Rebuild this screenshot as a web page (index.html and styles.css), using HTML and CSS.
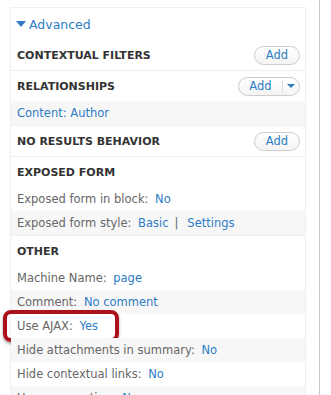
FILE: index.html
```html
<!DOCTYPE html>
<html lang="en">
<head>
    <meta charset="UTF-8">
    <title>Views - Advanced</title>
    <link rel="stylesheet" href="styles.css">
</head>
<body>
<div class="page">
    <div class="panel">
        <div class="advanced">
            <span class="caret"></span>
            <a href="#">Advanced</a>
        </div>

        <div class="section">
            <div class="section-head">
                <h3>Contextual filters</h3>
                <button class="add-button">Add</button>
            </div>
        </div>

        <div class="section">
            <div class="section-head">
                <h3>Relationships</h3>
                <div class="add-split">
                    <span class="add-label">Add</span>
                    <span class="add-caret"></span>
                </div>
            </div>
            <div class="item odd"><a href="#" class="first">Content: Author</a></div>
        </div>

        <div class="section">
            <div class="section-head">
                <h3>No results behavior</h3>
                <button class="add-button">Add</button>
            </div>
        </div>

        <div class="section">
            <div class="section-head">
                <h3>Exposed form</h3>
            </div>
            <div class="item">Exposed form in block: <a href="#">No</a></div>
            <div class="item odd">Exposed form style: <a href="#">Basic</a><span class="pipe">|</span><a href="#">Settings</a></div>
        </div>

        <div class="section last">
            <div class="section-head">
                <h3>Other</h3>
            </div>
            <div class="item">Machine Name: <a href="#">page</a></div>
            <div class="item odd">Comment: <a href="#">No comment</a></div>
            <div class="item">Use AJAX: <a href="#">Yes</a><span class="callout"></span></div>
            <div class="item odd">Hide attachments in summary: <a href="#">No</a></div>
            <div class="item">Hide contextual links: <a href="#">No</a></div>
            <div class="item odd">Use aggregation: <a href="#">No</a></div>
        </div>
    </div>
    <div class="rule"></div>
</div>
</body>
</html>
```

FILE: styles.css
```css
body {
    margin: 0;
    background-color: #fff;
    font-family: "DejaVu Sans", Verdana, sans-serif;
    overflow: hidden;
}

a {
    color: #2d7cc4;
    text-decoration: none;
}

.page {
    display: flex;
    height: 395px;
}

.panel {
    width: 294px;
    margin: 7px 0 0 10px;
    border: 1px solid #efefef;
    border-bottom: none;
}

.rule {
    width: 1px;
    margin-left: 13px;
    background-color: #c8c8c8;
}

.advanced {
    display: flex;
    align-items: center;
    height: 32px;
    padding-left: 5px;
    font-size: 12.5px;
}

.caret {
    width: 0;
    height: 0;
    border-left: 5px solid transparent;
    border-right: 5px solid transparent;
    border-top: 6px solid #2d7cc4;
    margin-right: 3px;
}

.section {
    border-bottom: 1px solid #efefef;
}

.section.last {
    border-bottom: none;
}

.section-head {
    display: flex;
    align-items: center;
    justify-content: space-between;
    height: 30px;
    padding: 0 5px 0 6px;
}

.section-head h3 {
    margin: 0;
    font-size: 11px;
    font-weight: bold;
    color: #333;
    text-transform: uppercase;
}

.add-button {
    width: 46px;
    height: 19px;
    padding: 0;
    border: 1px solid #ccc;
    border-radius: 10px;
    background: linear-gradient(#fff, #f4f4f4);
    color: #2d7cc4;
    font-family: inherit;
    font-size: 11.5px;
}

.add-split {
    display: flex;
    align-items: center;
    width: 60px;
    height: 17px;
    border: 1px solid #ccc;
    border-radius: 10px;
    background: linear-gradient(#fff, #f4f4f4);
}

.add-label {
    width: 43px;
    text-align: center;
    color: #2d7cc4;
    font-size: 11.5px;
    border-right: 1px solid #ddd;
    line-height: 13px;
}

.add-caret {
    width: 0;
    height: 0;
    margin-left: 4px;
    border-left: 4px solid transparent;
    border-right: 4px solid transparent;
    border-top: 4px solid #2d7cc4;
}

.item {
    position: relative;
    display: flex;
    align-items: center;
    height: 24px;
    padding-left: 6px;
    font-size: 11.5px;
    color: #666;
    white-space: pre;
}

.item a {
    margin-left: 3px;
}

.item a.first {
    margin-left: 0;
}

.item.odd {
    background-color: #f7f7f7;
}

.pipe {
    margin: 0 6px 0 6px;
}

.callout {
    position: absolute;
    left: -8px;
    top: -4px;
    width: 108px;
    height: 24px;
    border: 4px solid #ab121c;
    border-radius: 8px;
    box-shadow: 0 2px 3px rgba(0, 0, 0, 0.35);
}
```
